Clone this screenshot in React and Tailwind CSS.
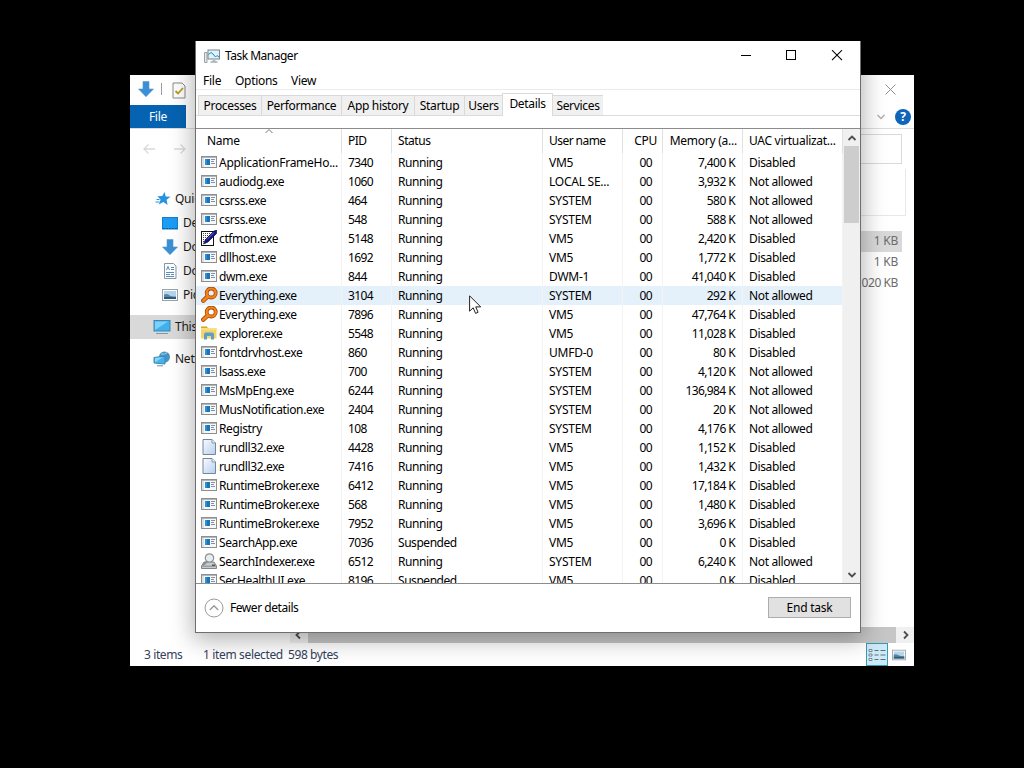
import React from 'react';
import clsx from 'clsx';

const TABS = [
  { label: 'Processes', width: 'w-[63px]' },
  { label: 'Performance', width: 'w-[80px]' },
  { label: 'App history', width: 'w-[73px]' },
  { label: 'Startup', width: 'w-[50px]' },
  { label: 'Users', width: 'w-[38px]' },
  { label: 'Details', width: 'w-[51px]', active: true },
  { label: 'Services', width: 'w-[50px]' },
];

// name, pid, status, user, memory, UAC virtualization, icon
const PROCESSES = [
  ['ApplicationFrameHo...', '7340', 'Running', 'VM5', '7,400 K', 'Disabled', 'app'],
  ['audiodg.exe', '1060', 'Running', 'LOCAL SE...', '3,932 K', 'Not allowed', 'app'],
  ['csrss.exe', '464', 'Running', 'SYSTEM', '580 K', 'Not allowed', 'app'],
  ['csrss.exe', '548', 'Running', 'SYSTEM', '588 K', 'Not allowed', 'app'],
  ['ctfmon.exe', '5148', 'Running', 'VM5', '2,420 K', 'Disabled', 'pen'],
  ['dllhost.exe', '1692', 'Running', 'VM5', '1,772 K', 'Disabled', 'app'],
  ['dwm.exe', '844', 'Running', 'DWM-1', '41,040 K', 'Disabled', 'app'],
  ['Everything.exe', '3104', 'Running', 'SYSTEM', '292 K', 'Not allowed', 'search'],
  ['Everything.exe', '7896', 'Running', 'VM5', '47,764 K', 'Disabled', 'search'],
  ['explorer.exe', '5548', 'Running', 'VM5', '11,028 K', 'Disabled', 'folder'],
  ['fontdrvhost.exe', '860', 'Running', 'UMFD-0', '80 K', 'Disabled', 'app'],
  ['lsass.exe', '700', 'Running', 'SYSTEM', '4,120 K', 'Not allowed', 'app'],
  ['MsMpEng.exe', '6244', 'Running', 'SYSTEM', '136,984 K', 'Not allowed', 'app'],
  ['MusNotification.exe', '2404', 'Running', 'SYSTEM', '20 K', 'Not allowed', 'app'],
  ['Registry', '108', 'Running', 'SYSTEM', '4,176 K', 'Not allowed', 'app'],
  ['rundll32.exe', '4428', 'Running', 'VM5', '1,152 K', 'Disabled', 'file'],
  ['rundll32.exe', '7416', 'Running', 'VM5', '1,432 K', 'Disabled', 'file'],
  ['RuntimeBroker.exe', '6412', 'Running', 'VM5', '17,184 K', 'Disabled', 'app'],
  ['RuntimeBroker.exe', '568', 'Running', 'VM5', '1,480 K', 'Disabled', 'app'],
  ['RuntimeBroker.exe', '7952', 'Running', 'VM5', '3,696 K', 'Disabled', 'app'],
  ['SearchApp.exe', '7036', 'Suspended', 'VM5', '0 K', 'Disabled', 'app'],
  ['SearchIndexer.exe', '6512', 'Running', 'SYSTEM', '6,240 K', 'Not allowed', 'indexer'],
  ['SecHealthUI.exe', '8196', 'Suspended', 'VM5', '0 K', 'Disabled', 'app'],
];

const GRID = 'grid grid-cols-[146px_50px_151px_80px_40px_80px_100px]';

const AppIcon = () => (
  <svg width="16" height="16" viewBox="0 0 16 16" shapeRendering="crispEdges">
    <rect x="0.5" y="2.5" width="15" height="11" fill="#f7f7f7" stroke="#8e8e8e" />
    <rect x="1" y="3" width="14" height="1" fill="#b5b5b5" />
    <rect x="1" y="4" width="2" height="9" fill="#dedede" />
    <rect x="4" y="5" width="5" height="6" fill="#1a75b8" />
    <rect x="4" y="5" width="2" height="6" fill="#2b8fd6" />
    <path d="M10 5.5h4M10 7.500h3M10 9.500h4" stroke="#7f8fb0" />
  </svg>
);

const PenIcon = () => (
  <svg width="16" height="16" viewBox="0 0 16 16">
    <rect x="0.5" y="1.500" width="12" height="14" fill="#fff" stroke="#111" />
    <path d="M2 3.500h8M2 5.500h7M2 7.500h6M2 9.500h4M2 11.500h3" stroke="#444" strokeDasharray="1 1" />
    <path d="M2.500 14l2-4.500L13 1l2.500-1v3.500L7 12z" fill="#15157e" stroke="#0b0b46" strokeWidth="0.700" />
    <path d="M6 9.500l7-7" stroke="#6b6bd4" />
  </svg>
);

const SearchIcon = () => (
  <svg width="17" height="16" viewBox="0 0 17 16" fill="none">
    <path d="M6 10.200L2.300 13.700" stroke="#a84a08" strokeWidth="4.400" strokeLinecap="round" />
    <circle cx="10.200" cy="6" r="4.500" stroke="#a84a08" strokeWidth="3.800" />
    <circle cx="10.200" cy="6" r="4.500" stroke="#f5841a" strokeWidth="2.200" />
    <path d="M6.500 9.700L2.300 13.700" stroke="#f5841a" strokeWidth="2.700" strokeLinecap="round" />
  </svg>
);

const FolderIcon = () => (
  <svg width="16" height="16" viewBox="0 0 16 16">
    <path d="M0 1.500h6l1 2H0z" fill="#d9a520" />
    <path d="M0 3h15.500v10.500H0z" fill="#f5d469" />
    <path d="M0 3h15.500v2H0z" fill="#f8df85" />
    <path d="M3 14.500V9.500q0-2 2-2h6q2 0 2 2v5h-3v-3.500H6v3.500z" fill="#5b9fc4" />
  </svg>
);

const FileIcon = () => (
  <svg width="16" height="16" viewBox="0 0 16 16">
    <defs>
      <linearGradient id="paper" x1="0" y1="0" x2="1" y2="1">
        <stop offset="0" stopColor="#fafcff" />
        <stop offset="1" stopColor="#b5cfee" />
      </linearGradient>
    </defs>
    <path d="M2 0.500h9l3.500 3.500v11.500H2z" fill="url(#paper)" stroke="#75859b" />
    <path d="M11 0.500V4h3.500" fill="#e8f0fa" stroke="#75859b" strokeWidth="0.800" />
  </svg>
);

const IndexerIcon = () => (
  <svg width="16" height="16" viewBox="0 0 16 16">
    <path d="M3 9h10l2.500 4v2.500H0.500V13z" fill="#c9ccce" stroke="#77797c" strokeWidth="0.900" />
    <path d="M1 13.200h14" stroke="#77797c" strokeWidth="0.800" />
    <path d="M6 8.500l-4 3.500" stroke="#8a8d90" strokeWidth="2" />
    <circle cx="8.500" cy="5" r="4.200" fill="#e3edf2" stroke="#8f9396" strokeWidth="1.200" />
    <rect x="11" y="11.500" width="3" height="1.500" fill="#555" />
  </svg>
);

const ICONS = {
  app: AppIcon,
  pen: PenIcon,
  search: SearchIcon,
  folder: FolderIcon,
  file: FileIcon,
  indexer: IndexerIcon,
};

const DownArrow = () => (
  <svg width="16" height="16" viewBox="0 0 16 16">
    <path d="M5 0.500h6V8h4.500L8 15.700 0.500 8H5z" fill="#3c8fd3" stroke="#4f9ad6" strokeWidth="0.600" />
  </svg>
);

const StarIcon = () => (
  <svg width="16" height="16" viewBox="0 0 16 16">
    <path d="M9.500 1l1.200 4.500 4.800.3-3.900 2.900 1 5.300-4.200-2.900-4.600 2.400 1.800-4.800-3.100-3.400 4.800-.2z" fill="#2593dd" />
    <path d="M1.500 8.500h3M0.500 11h4" stroke="#2593dd" />
  </svg>
);

const DesktopIcon = () => (
  <svg width="16" height="16" viewBox="0 0 16 16">
    <rect x="0.500" y="2.500" width="15" height="11.500" fill="#1c9cf2" stroke="#1380cf" />
    <path d="M1 13.500h14" stroke="#0d5f9e" strokeDasharray="2 1" />
  </svg>
);

const DocumentIcon = () => (
  <svg width="16" height="16" viewBox="0 0 16 16">
    <path d="M2.500 0.500h9l2.500 2.500v12.500H2.500z" fill="#fdfdfd" stroke="#8c959c" />
    <path d="M4.500 7l1.500-3.500L7.500 7M9 4.500h3M9 6.500h3" fill="none" stroke="#4a8cc2" />
    <path d="M4 9.500h8M4 11.500h4M9 11.500h3M4 13.500h8" stroke="#5a8ebb" />
  </svg>
);

const PictureIcon = ({ size = 16 }) => (
  <svg width={size} height={size} viewBox="0 0 16 16">
    <rect x="0.500" y="2.500" width="15" height="11" fill="#fff" stroke="#9aa3aa" />
    <rect x="2" y="4" width="12" height="8" fill="#b3d6ec" />
    <path d="M2 7.500q3-1 5 .5t7 1.500V12H2z" fill="#5c87a4" />
    <path d="M2 10h12v2H2z" fill="#2f5a78" />
  </svg>
);

const PcIcon = () => (
  <svg width="18" height="16" viewBox="0 0 18 16">
    <rect x="1" y="1.500" width="16" height="10.500" fill="#41b1ed" stroke="#3b87b3" />
    <path d="M2 11V2.500h13z" fill="#7dd0f8" />
    <path d="M3 14.500h12" stroke="#7c98a9" />
  </svg>
);

const NetworkIcon = () => (
  <svg width="18" height="16" viewBox="0 0 18 16">
    <circle cx="11.500" cy="6" r="5.500" fill="#4a94c4" />
    <path d="M8 3q4 1 6-1.500" stroke="#a8d6ee" fill="none" />
    <path d="M1 6.500l11-1.500v8L1 12z" fill="#45b2ee" stroke="#3b87b3" />
    <path d="M2 11.500V7l8-1z" fill="#8ad5f8" />
    <path d="M4 14.800h6" stroke="#6d8fa3" />
  </svg>
);

const TaskManagerIcon = () => (
  <svg width="16" height="16" viewBox="0 0 16 16" fill="none">
    <path d="M0.500 4.500h2.500v10H0.500z" fill="#e8e8e8" stroke="#9ba1a4" />
    <rect x="4" y="2" width="11.500" height="9" fill="#dff3fb" stroke="#79868e" />
    <path d="M4.500 6.500l2.500-2 2 1.500 2.500 3L13 7.500l2 1.500" stroke="#2389b5" />
    <path d="M8.500 11.500h3v2h-3z" fill="#b8bfc3" />
    <path d="M6.500 14h7" stroke="#79868e" />
  </svg>
);

const Chevron = ({ d, color = '#4d4d4d', width = 1.8 }) => (
  <svg width="10" height="10" viewBox="0 0 10 10" fill="none" stroke={color} strokeWidth={width}>
    <path d={d} />
  </svg>
);

const UP = 'M1.500 7L5 3.500L8.500 7';
const DOWN = 'M1.500 3L5 6.500L8.500 3';
const LEFT = 'M7 1.500L3.500 5L7 8.500';
const RIGHT = 'M3 1.500L6.500 5L3 8.500';

const SIDEBAR = [
  { label: 'Quick access', icon: StarIcon, cls: 'pl-[25px] gap-[4px]' },
  { label: 'Desktop', icon: DesktopIcon, cls: 'pl-8 gap-[5px]' },
  { label: 'Downloads', icon: DownArrow, cls: 'pl-8 gap-[5px]' },
  { label: 'Documents', icon: DocumentIcon, cls: 'pl-8 gap-[5px]' },
  { label: 'Pictures', icon: PictureIcon, cls: 'pl-8 gap-[5px]' },
  { label: 'This PC', icon: PcIcon, cls: 'mt-2 bg-[#d9d9d9] pl-[23px] gap-[4px]' },
  { label: 'Network', icon: NetworkIcon, cls: 'mt-2 pl-[23px] gap-[4px]' },
];

const ExplorerWindow = () => (
  <div className="absolute left-[130px] top-[75px] flex h-[591px] w-[784px] flex-col overflow-hidden bg-white text-[#3b3b3b]">
    <div className="flex h-[30px] shrink-0 items-center pl-2">
      <div className="-mt-[2px]">
        <DownArrow />
      </div>
      <div className="-mt-[2px] ml-[7px] h-3 w-px bg-[#9a9a9a]" />
      <svg className="ml-[10px]" width="14" height="17" viewBox="0 0 14 17" fill="none">
        <path d="M1 1h9l3 3v12H1z" fill="#fdfdfd" stroke="#8a8a8a" />
        <path d="M3.500 9l2.500 2.500 5-5.500" stroke="#b99a1c" strokeWidth="1.800" />
      </svg>
      <svg className="-mt-[2px] ml-auto mr-[18px]" width="11" height="11" viewBox="0 0 11 11" stroke="#8f8f8f">
        <path d="M0.500 0.500l10 10M10.500 0.500l-10 10" />
      </svg>
    </div>
    <div className="flex h-[24px] shrink-0 items-center border-b border-[#dadbdc]">
      <div className="flex h-full w-14 items-center justify-center bg-[#0663b1] pt-px text-white">File</div>
      <div className="ml-auto flex items-center gap-[9px] pr-[3px]">
        <Chevron d={DOWN} color="#b0b0b0" width={1.5} />
        <div className="flex h-4 w-4 items-center justify-center rounded-full bg-[#0f66b8] text-[12px] font-bold text-white">?</div>
      </div>
    </div>
    <div className="flex h-[40px] shrink-0 items-center pl-[13px] pr-3">
      <svg width="44" height="12" viewBox="0 0 44 12" fill="none" stroke="#d9d9d9" strokeWidth="1.300">
        <path d="M12 6H1M5.500 1.500L1 6l4.500 4.500M31 6h11M37.500 1.500L42 6l-4.500 4.500" />
      </svg>
      <div className="ml-auto h-[30px] w-[200px] border border-[#d9d9d9]" />
    </div>
    <div className="flex min-h-0 flex-1">
      <div className="flex w-[160px] shrink-0 flex-col pt-[18px]">
        {SIDEBAR.map(({ label, icon: Icon, cls }) => (
          <div key={label} className={clsx('flex h-6 shrink-0 items-center whitespace-nowrap text-[#1a1a1a]', cls)}>
            <Icon />
            <span>{label}</span>
          </div>
        ))}
      </div>
      <div className="flex flex-1 flex-col">
        <div className="mr-2 h-[47px] border-b border-r border-[#e8e8e8]" />
        <div className="mr-3 mt-[15px] flex flex-col text-right text-[#6d6d6d]">
          <div className="h-[21px] bg-[#d9d9d9] pr-1 leading-[19px]">1 KB</div>
          <div className="h-[21px] pr-1 leading-[20px]">1 KB</div>
          <div className="h-[21px] pr-1 leading-[20px] tracking-[-0.400px]">1,020 KB</div>
        </div>
        <div className="mt-auto flex h-[16px] items-center bg-[#f0f0f0] pl-[3px] pr-[3px]">
          <Chevron d={LEFT} />
          <div className="mx-[5px] h-full flex-1 bg-[#c6c6c6]" />
          <Chevron d={RIGHT} />
        </div>
      </div>
    </div>
    <div className="flex h-[23px] shrink-0 items-center pl-[14px] pr-[8px] tracking-[-0.400px] text-[#34405c]">
      <span className="w-[59px]">3 items</span>
      <span className="w-[85px] whitespace-nowrap tracking-[-0.350px]">1 item selected</span>
      <span>598 bytes</span>
      <div className="ml-auto flex h-[23px] w-[22px] items-center justify-center border border-[#3b9ab0] bg-[#cdeaf7]">
        <svg width="18" height="14" viewBox="0 0 18 14" fill="none" stroke="#5a7080">
          <path d="M1 1.500h3v2H1zM1 6h3v2H1zM1 10.500h3v2H1z" fill="#fff" strokeWidth="0.800" />
          <path d="M6.500 2.500h4M12.500 2.500h5M6.500 7h4M12.500 7h5M6.500 11.500h4M12.500 11.500h5" />
        </svg>
      </div>
      <div className="ml-[4px]">
        <PictureIcon size={14} />
      </div>
    </div>
  </div>
);

const ProcessRow = ({ row, hovered }) => {
  const [name, pid, status, user, memory, uac, icon] = row;
  const Icon = ICONS[icon];
  return (
    <div className={clsx(GRID, 'h-[19px] shrink-0 whitespace-nowrap leading-[19px]', hovered && 'bg-[#e5f1fa]')}>
      <div className="flex items-center border-r border-[#f3f3f3] pl-[5px]">
        <span className="-mt-px w-[18px]">
          <Icon />
        </span>
        <span className={name.endsWith('...') ? 'tracking-[-0.270px]' : 'tracking-[-0.370px]'}>{name}</span>
      </div>
      <div className="border-r border-[#f3f3f3] pl-[6px] tracking-[-0.600px]">{pid}</div>
      <div className="border-r border-[#f3f3f3] pl-[6px] tracking-[-0.450px]">{status}</div>
      <div className="border-r border-[#f3f3f3] pl-[6px] tracking-[-0.250px]">{user}</div>
      <div className="border-r border-[#f3f3f3] pr-[10px] text-right tracking-[-0.600px]">00</div>
      <div className="border-r border-[#f3f3f3] pr-[7px] text-right tracking-[-0.600px]">{memory}</div>
      <div className="border-r border-[#f3f3f3] pl-[6px] tracking-[-0.350px]">{uac}</div>
    </div>
  );
};

const TaskManager = () => (
  <div className="absolute left-[195px] top-[41px] flex h-[592px] w-[666px] flex-col border border-t-0 border-[#6e6e6e] bg-white text-black shadow-[0_5px_22px_2px_rgba(0,0,0,0.300)]">
    <div className="flex h-[30px] shrink-0 items-center pl-2">
      <TaskManagerIcon />
      <span className="ml-[5px] tracking-[-0.500px]">Task Manager</span>
      <svg className="ml-auto mr-[17px]" width="103" height="12" viewBox="0 0 103 12" fill="none" stroke="#000">
        <path d="M0.500 5.500h10M46 0.500h9v9h-9z" shapeRendering="crispEdges" />
        <path d="M92 0.200l10 10M102 0.200l-10 10" strokeWidth="1.100" />
      </svg>
    </div>
    <div className="flex h-[19px] shrink-0 items-center gap-[14px] border-b border-[#ebebeb] pl-[7px] pt-[2px]">
      <span className="w-[18px]">File</span>
      <span className="w-[42px] tracking-[-0.300px]">Options</span>
      <span>View</span>
    </div>
    <div className="flex h-[26px] shrink-0 items-end border-b border-[#dcdcdc] pl-[2px] tracking-[-0.330px]">
      {TABS.map((tab) => (
        <div
          key={tab.label}
          className={clsx(
            'flex items-center justify-center whitespace-nowrap border border-[#d9d9d9]',
            tab.width,
            tab.active ? '-mb-px h-[23px] border-b-0 bg-white pb-[2px]' : 'h-[20px] border-b-0 border-r-0 bg-[#f0f0f0]',
            tab.label === 'Services' && 'border-l-0 border-r'
          )}
        >
          {tab.label}
        </div>
      ))}
    </div>
    <div className="mt-[12px] flex h-[456px] shrink-0 border-y border-[#8c8c8c]">
      <div className="flex flex-1 flex-col overflow-hidden">
        <div className={clsx(GRID, 'relative h-[24px] shrink-0 whitespace-nowrap leading-[24px]')}>
          <div className="absolute left-[68px] top-[-3px]">
            <Chevron d={UP} color="#777" width={1} />
          </div>
          <div className="border-r border-[#e0e0e0] pl-[11px]">Name</div>
          <div className="border-r border-[#e0e0e0] pl-[6px] tracking-[-0.500px]">PID</div>
          <div className="border-r border-[#e0e0e0] pl-[6px] tracking-[-0.450px]">Status</div>
          <div className="border-r border-[#e0e0e0] pl-[6px] tracking-[-0.550px]">User name</div>
          <div className="border-r border-[#e0e0e0] pr-[5px] text-right">CPU</div>
          <div className="border-r border-[#e0e0e0] pr-[5px] text-right">Memory (a...</div>
          <div className="border-r border-[#e0e0e0] pl-[6px] tracking-[-0.300px]">UAC virtualizat...</div>
        </div>
        {PROCESSES.map((row, i) => (
          <ProcessRow key={row[1]} row={row} hovered={i === 7} />
        ))}
      </div>
      <div className="flex w-[17px] flex-col items-center bg-[#f0f0f0]">
        <div className="flex h-[17px] items-center">
          <Chevron d={UP} />
        </div>
        <div className="h-[77px] w-[15px] bg-[#cdcdcd]" />
        <div className="mt-auto flex h-[17px] items-center">
          <Chevron d={DOWN} />
        </div>
      </div>
    </div>
    <div className="flex flex-1 items-center pb-px pl-2 pr-[9px]">
      <svg width="20" height="20" viewBox="0 0 20 20" fill="none" stroke="#9a9a9a">
        <circle cx="10" cy="10" r="9" />
        <path d="M5.800 12L10 7.800l4.200 4.200" strokeWidth="1.400" />
      </svg>
      <span className="ml-[6px] tracking-[-0.450px]">Fewer details</span>
      <button className="ml-auto h-[21px] w-[83px] border border-[#adadad] bg-[#e1e1e1]">End task</button>
    </div>
  </div>
);

const App = () => (
  <div className="relative h-[768px] w-[1024px] overflow-hidden bg-black font-['Noto_Sans',sans-serif] text-[12px] leading-4 tracking-[-0.25px]">
    <ExplorerWindow />
    <TaskManager />
    <svg className="absolute left-[469px] top-[295px]" width="13" height="20" viewBox="0 0 13 20">
      <path d="M0.600 0.800v15.400l3.600-3.400 2.400 5.600 2.500-1.100-2.400-5.400h5z" fill="#fff" stroke="#222" />
    </svg>
  </div>
);

export default App;
